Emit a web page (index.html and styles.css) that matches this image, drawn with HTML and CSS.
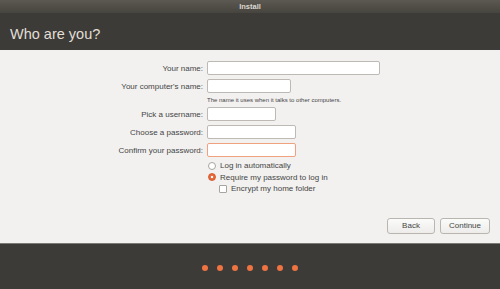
FILE: index.html
```html
<!DOCTYPE html>
<html lang="en">
<head>
    <meta charset="UTF-8">
    <title>Install</title>
    <link rel="stylesheet" href="styles.css">
</head>
<body>
    <!-- window title -->
    <div class="titlebar">Install</div>
    <!-- page header -->
    <div class="header">Who are you?</div>
    <!-- form area -->
    <div class="content">
        <div class="form">
            <label class="lbl">Your name:</label>
            <div><span class="field w-name"></span></div>

            <label class="lbl">Your computer's name:</label>
            <div><span class="field w-comp"></span></div>

            <span></span>
            <div class="hint">The name it uses when it talks to other computers.</div>

            <label class="lbl">Pick a username:</label>
            <div><span class="field w-user"></span></div>

            <label class="lbl">Choose a password:</label>
            <div><span class="field w-pass"></span></div>

            <label class="lbl">Confirm your password:</label>
            <div><span class="field w-pass bad"></span></div>

            <span></span>
            <div class="opts">
                <div class="opt"><span class="radio"></span>Log in automatically</div>
                <div class="opt"><span class="radio on"></span>Require my password to log in</div>
                <div class="opt sub"><span class="check"></span>Encrypt my home folder</div>
            </div>
        </div>
        <div class="buttons">
            <span class="btn back">Back</span>
            <span class="btn next">Continue</span>
        </div>
    </div>
    <!-- progress dots -->
    <div class="footer">
        <span class="dot"></span>
        <span class="dot"></span>
        <span class="dot"></span>
        <span class="dot"></span>
        <span class="dot"></span>
        <span class="dot"></span>
        <span class="dot"></span>
    </div>
</body>
</html>
```
FILE: styles.css
```css
body{
    margin: 0;
    width: 500px;
    height: 289px;
    overflow: hidden;
    font-family: "Liberation Sans", "DejaVu Sans", sans-serif;
    background-color: #3c3b37;
}
.titlebar{
    height: 13px;
    line-height: 13px;
    text-align: center;
    font-size: 7.5px;
    font-weight: bold;
    color: #dcd8d0;
    background: linear-gradient(#5c5852, #47453f);
}
.header{
    height: 37px;
    box-sizing: border-box;
    padding: 13px 0 0 10px;
    font-size: 14.5px;
    color: #e2ded6;
    background-color: #3c3b37;
}
.content{
    height: 193px;
    box-sizing: border-box;
    padding: 11px 10px 9px 0;
    background-color: #f2f1f0;
    display: flex;
    flex-direction: column;
    justify-content: space-between;
}
.form{
    display: grid;
    grid-template-columns: 203px auto;
    column-gap: 4px;
    row-gap: 4px;
    align-items: center;
}
.lbl{
    text-align: right;
    font-size: 8px;
    color: #454545;
}
.field{
    display: block;
    height: 14px;
    box-sizing: border-box;
    border: 1px solid #bdbab5;
    border-radius: 2px;
    background-color: #fff;
}
.w-name{ width: 173px; }
.w-comp{ width: 84px; }
.w-user{ width: 69px; }
.w-pass{ width: 89px; }
.bad{
    border-color: #f0a27f;
}
.hint{
    font-size: 6px;
    color: #454545;
}
.opts{
    margin-top: -1px;
}
.opt{
    display: flex;
    align-items: center;
    height: 11.5px;
    font-size: 8px;
    color: #454545;
}
.opt.sub{
    padding-left: 12px;
}
.radio{
    width: 6px;
    height: 6px;
    margin: 0 4px 0 1px;
    border: 1px solid #a8a5a0;
    border-radius: 50%;
    background-color: #fff;
    flex: none;
}
.radio.on{
    border-color: #d9582c;
    background: radial-gradient(circle, #fff 0 1.3px, #e9683a 1.6px);
}
.check{
    width: 6px;
    height: 6px;
    margin-right: 4px;
    border: 1px solid #a8a5a0;
    border-radius: 1px;
    background-color: #fff;
    flex: none;
}
.buttons{
    display: flex;
    justify-content: flex-end;
    gap: 5px;
}
.btn{
    height: 16px;
    line-height: 14px;
    box-sizing: border-box;
    border: 1px solid #b9b6b0;
    border-radius: 3px;
    background: linear-gradient(#fbfbfa, #edecea);
    font-size: 8px;
    color: #454545;
    text-align: center;
}
.back{ width: 48px; }
.next{ width: 50px; }
.footer{
    height: 45px;
    box-sizing: border-box;
    border-top: 1px solid #7c7a75;
    padding-top: 21px;
    display: flex;
    justify-content: center;
    gap: 9px;
    background-color: #3c3b37;
}
.dot{
    width: 6px;
    height: 6px;
    border-radius: 50%;
    background-color: #ef7441;
}
```
